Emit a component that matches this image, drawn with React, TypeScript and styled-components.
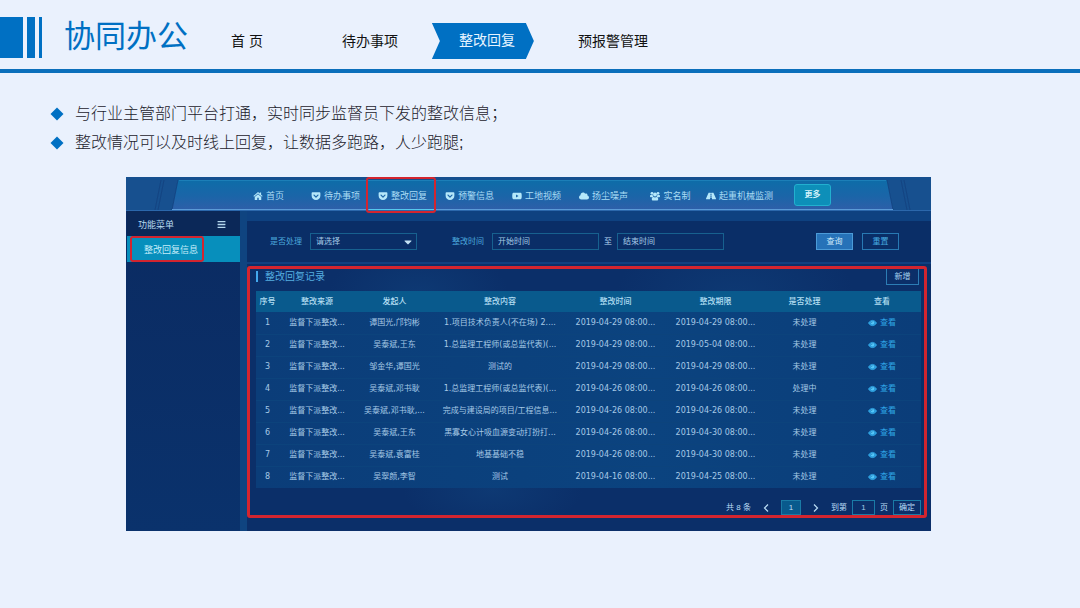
import React from "react";
import styled, { createGlobalStyle } from "styled-components";
import {
  FaBars,
  FaCaretDown,
  FaCloud,
  FaGetPocket,
  FaRoad,
  FaYoutube,
} from "react-icons/fa";

const sans = `"Liberation Sans", "Noto Sans CJK SC", sans-serif`;
const dense = `"DejaVu Sans", "Noto Sans CJK SC", sans-serif`;
const brand = "#0070c3";
const red = "#d3252f";

const GlobalStyle = createGlobalStyle`
  * { box-sizing: border-box; }
  body { margin: 0; background: #eaf1fd; font-family: ${sans}; }
  button, input, select { font: inherit; margin: 0; }
  a { color: inherit; text-decoration: none; }
`;

const Page = styled.div`
  min-height: 100vh;
  padding-bottom: 76px;
`;

const TopBar = styled.header`
  display: flex;
  align-items: flex-start;
  height: 73px;
  border-bottom: 4px solid #0b6fbb;
  white-space: nowrap;
`;

const Stripes = styled.div`
  display: flex;
  gap: 4px;
  margin-top: 17px;
  height: 41px;
`;

const Stripe = styled.span<{ $w: number }>`
  width: ${(p) => p.$w}px;
  background: ${brand};
`;

const Title = styled.h1`
  margin: 15px 43px 0 22px;
  font-size: 31px;
  line-height: 44px;
  font-weight: 400;
  color: ${brand};
`;

const TopNav = styled.nav`
  display: flex;
  align-items: center;
  margin-top: 23px;
  height: 36px;
  font-size: 14px;
  line-height: 36px;
  color: #111;
`;

const TopLink = styled.a<{ $after?: number }>`
  margin-right: ${(p) => p.$after ?? 0}px;
`;

const ActiveLink = styled(TopLink)`
  padding: 0 19px 0 27px;
  height: 36px;
  line-height: 34px;
  color: #e6f4ff;
  background: ${brand};
  clip-path: polygon(0 0, calc(100% - 8px) 0, 100% 50%, calc(100% - 8px) 100%, 0 100%, 8px 50%);
`;

const Points = styled.ul`
  list-style: none;
  margin: 26px 0 20px;
  padding: 0 0 0 50px;
  font-size: 16px;
  font-weight: 300;
  line-height: 29px;
  color: #1c222c;
`;

const Point = styled.li`
  display: flex;
  align-items: center;
  gap: 11px;
`;

const Board = styled.section`
  margin: 0 149px 0 126px;
  background: #0b2f69;
  color: #b9dcf5;
  font-size: 8px;
  line-height: 12px;
  white-space: nowrap;
`;

const BoardBar = styled.div`
  display: flex;
  height: 34px;
  padding-top: 3px;
  background: #154f8f;
  border-bottom: 1px solid #2b67ab;
`;

const BarEdge = styled.svg`
  flex: none;
  height: 30px;
`;

const BarMiddle = styled.nav`
  flex: 1;
  display: flex;
  align-items: stretch;
  padding-left: 51px;
  background: linear-gradient(#0e6ca8, #1b65a8 55%, #2d5fa9);
  border-top: 1px solid #1c7fb8;
  border-bottom: 1px solid #5b9bd8;
  font-size: 9px;
`;

const BarLink = styled.a<{ $wide?: boolean }>`
  position: relative;
  display: flex;
  align-items: center;
  justify-content: center;
  gap: 3px;
  width: ${(p) => (p.$wide ? 71 : 67)}px;
  padding-top: 2px;
  color: #a9dcf5;
  svg { width: 10px; height: 10px; color: #b5e8fa; }
`;

const BarActive = styled(BarLink)`
  box-shadow: 0 1px 0 #55c8ee;
`;

const Marker = styled.span<{ $inset: string }>`
  position: absolute;
  inset: ${(p) => p.$inset};
  border: 2px solid ${red};
  border-radius: 3px;
  pointer-events: none;
`;

const MoreButton = styled.button`
  align-self: center;
  margin-left: 19px;
  width: 37px;
  height: 22px;
  padding: 0;
  border: 1px solid #22b0cf;
  border-radius: 3px;
  background: #0d8fb9;
  color: #d3f3fb;
  font-size: 8px;
  font-weight: 700;
`;

const BoardBody = styled.div`
  display: flex;
`;

const Side = styled.aside`
  width: 114px;
  padding-left: 1px;
  background: linear-gradient(#0b2b62, #0a326c);
  font-size: 9px;
`;

const SideHead = styled.div`
  display: flex;
  align-items: center;
  justify-content: space-between;
  height: 25px;
  padding: 2px 14px 0 11px;
  background: #0b2858;
  color: #b5d8ee;
`;

const SideItem = styled.a`
  position: relative;
  display: flex;
  align-items: center;
  height: 26px;
  padding: 2px 0 0 17px;
  background: #078fbc;
  color: #c4edfa;
`;

const Main = styled.main`
  flex: 1;
  min-width: 0;
  padding-left: 7px;
  background: #0f4480;
`;

const Filters = styled.form`
  display: flex;
  align-items: center;
  height: 53px;
  padding: 0 32px 0 23px;
  border-top: 10px solid #0e4180;
  border-bottom: 2px solid #104080;
  background: #0a2e67;
`;

const FieldLabel = styled.label`
  margin-right: 8px;
  color: #4aa8dc;
`;

const Field = styled.span`
  position: relative;
  display: flex;
  align-items: center;
  width: 107px;
  svg { position: absolute; right: 3px; width: 12px; height: 12px; color: #c4e2f4; pointer-events: none; }
`;

const fieldLook = `
  width: 100%;
  height: 17px;
  padding: 0 5px;
  border: 1px solid #17618f;
  border-radius: 0;
  background: transparent;
  color: #a5cbe6;
  appearance: none;
  outline: none;
`;

const Select = styled.select`${fieldLook}`;

const Input = styled.input`
  ${fieldLook}
  &::placeholder { color: #a5cbe6; opacity: 1; }
`;

const RangeGap = styled.span`
  width: 18px;
  text-align: center;
`;

const RangeGroup = styled.div`
  display: flex;
  align-items: center;
  margin-left: 35px;
`;

const Actions = styled.div`
  display: flex;
  gap: 9px;
  margin-left: auto;
`;

const ActionButton = styled.button<{ $solid?: boolean }>`
  width: 37px;
  height: 17px;
  padding: 0;
  border: 1px solid ${(p) => (p.$solid ? "#4b9bd8" : "#2879b3")};
  background: ${(p) => (p.$solid ? "#2672b8" : "transparent")};
  color: ${(p) => (p.$solid ? "#d0eafb" : "#46a9e0")};
`;

const RecordsArea = styled.div`
  padding: 2px 4px 13px 0;
  background: #0b2f69;
`;

const Records = styled.section`
  padding: 0 3px 0 6px;
  border: 3px solid ${red};
  border-radius: 3px;
  background:
    radial-gradient(ellipse 90px 50px at 25% 10%, rgba(20, 80, 140, 0.3), transparent),
    radial-gradient(ellipse 120px 70px at 72% 12%, rgba(20, 80, 140, 0.3), transparent),
    radial-gradient(ellipse 90px 40px at 36% 90%, rgba(20, 80, 140, 0.3), transparent),
    #0b2f69;
`;

const RecordsHead = styled.div`
  display: flex;
  align-items: flex-start;
  justify-content: space-between;
  height: 22px;
`;

const RecordsTitle = styled.h2`
  margin: 2px 0 0;
  padding-left: 7px;
  border-left: 2px solid #43a9ee;
  font-size: 10px;
  line-height: 11px;
  font-weight: 400;
  color: #55aee0;
`;

const AddButton = styled.button`
  width: 33px;
  height: 16px;
  margin-right: 2px;
  padding: 0;
  border: 1px solid #2c7db5;
  border-top: 0;
  background: transparent;
  color: #a5d2ee;
`;

const Table = styled.table`
  width: 100%;
  table-layout: fixed;
  border-collapse: collapse;
  font-family: ${dense};
  text-align: center;
  th, td { height: 22px; padding: 0; overflow: hidden; }
  thead { background: #095a8d; color: #b3def2; }
  th { font-weight: 500; height: 21px; }
  tbody { background: linear-gradient(90deg, #0b3d79, #0b437f 60%, #0b3d79); color: #a6c9e6; }
  tbody tr + tr { border-top: 1px solid #0c437c; }
`;

const ViewLink = styled.a`
  display: flex;
  align-items: center;
  justify-content: center;
  gap: 3px;
  color: #2fa6e6;
`;

const Pager = styled.nav`
  display: flex;
  align-items: center;
  justify-content: flex-end;
  gap: 5px;
  margin-top: 12px;
`;

const PagerButton = styled.button<{ $look?: "page" | "outline" }>`
  display: flex;
  align-items: center;
  justify-content: center;
  width: ${(p) => (p.$look === "outline" ? 28 : 20)}px;
  height: 15px;
  padding: 0;
  border: ${(p) => (p.$look ? "1px solid #1a7ba6" : "0")};
  background: ${(p) => (p.$look === "page" ? "#095a8d" : "transparent")};
  color: #b9dcf5;
`;

const PageInput = styled(Input)`
  width: 23px;
  height: 15px;
  padding: 0;
  border-color: #1a7ba6;
  text-align: center;
`;

const columns: [string, number][] = [
  ["序号", 23],
  ["整改来源", 76],
  ["发起人", 79],
  ["整改内容", 132],
  ["整改时间", 99],
  ["整改期限", 101],
  ["是否处理", 77],
  ["查看", 78],
];
const total = columns.reduce((sum, [, w]) => sum + w, 0);

const rows = [
  ["谭国光,邝钧彬", "1.项目技术负责人(不在场) 2....", "04-29", "04-29", "未处理"],
  ["吴泰斌,王东", "1.总监理工程师(或总监代表)(...", "04-29", "05-04", "未处理"],
  ["邹金华,谭国光", "测试的", "04-29", "04-29", "未处理"],
  ["吴泰斌,邓书耿", "1.总监理工程师(或总监代表)(...", "04-26", "04-26", "处理中"],
  ["吴泰斌,邓书耿,...", "完成与建设局的项目/工程信息...", "04-26", "04-26", "未处理"],
  ["吴泰斌,王东", "黑寡女心计吸血源变动打扮打...", "04-26", "04-30", "未处理"],
  ["吴泰斌,袁富桂", "地基基础不稳", "04-26", "04-30", "未处理"],
  ["吴翠颜,李智", "测试", "04-16", "04-25", "未处理"],
];

const Diamond = () => (
  <svg width="14" height="14" viewBox="0 0 14 14" aria-hidden="true">
    <path d="M7 0.5 13.5 7 7 13.5 0.5 7z" fill={brand} />
  </svg>
);

const HomeIcon = () => (
  <svg viewBox="0 0 20 20" fill="currentColor" aria-hidden="true">
    <path d="M10 2 0.8 10l1.3 1.6L10 4.9l7.9 6.7 1.3-1.6-3-2.6V3h-2.6v2.1z" />
    <path d="M10 6.4 3.5 12v6h5v-4.5h3V18h5v-6z" />
  </svg>
);

const PeopleIcon = () => (
  <svg viewBox="0 0 20 20" fill="currentColor" aria-hidden="true">
    <circle cx="4" cy="4.6" r="2.8" />
    <circle cx="16" cy="4.6" r="2.8" />
    <circle cx="10" cy="7" r="3.8" />
    <path d="M0 11V9.600C0 8.300 .8 7.800 2 7.800h3.200c.2 1.600.9 2.800 1.800 3.600-1 .1-1.700.4-2.300 1H1.600C.6 12.400 0 12 0 11zM20 11V9.600c0-1.300-.8-1.800-2-1.800h-3.200c-.2 1.600-.9 2.800-1.800 3.600 1 .1 1.700.4 2.300 1h3.100c1 0 1.600-.4 1.600-1.400z" />
    <path d="M3.600 16.500c0-2.800 1-4.600 3.400-4.600.8.6 1.800 1 3 1s2.200-.4 3-1c2.400 0 3.400 1.800 3.400 4.600 0 1.500-1 2.500-2.500 2.500H6.100c-1.500 0-2.500-1-2.500-2.500z" />
  </svg>
);

const EyeIcon = () => (
  <svg width="9" height="8" viewBox="0 0 18 16" aria-hidden="true">
    <path d="M1 8C3 4.500 6 2.800 9 2.800S15 4.500 17 8c-2 3.500-5 5.200-8 5.200S3 11.500 1 8z" fill="#2a98d8" stroke="#39b6f3" strokeWidth="1.400" />
    <circle cx="9" cy="7.500" r="3.600" fill="#55c8fa" />
    <path d="M7 7.500A2 2 0 0 1 9 5.500" stroke="#0b437f" fill="none" />
  </svg>
);

const Chevron = ({ next }: { next?: boolean }) => (
  <svg width="6" height="10" viewBox="0 0 6 10" fill="none" stroke="currentColor" strokeWidth="1.2" aria-hidden="true">
    <path d={next ? "M1 1.500 4.500 5 1 8.500" : "M5 1.500 1.500 5 5 8.500"} />
  </svg>
);

const EdgeArt = ({ flip }: { flip?: boolean }) => {
  const width = flip ? 50 : 58;
  const fillId = flip ? "edgeR" : "edgeL";
  return (
    <BarEdge width={width} viewBox={`0 0 ${width} 30`} aria-hidden="true">
      <defs>
        <linearGradient id={fillId} x1="0" y1="0" x2="0" y2="1">
          <stop offset="0" stopColor="#0e6ca8" />
          <stop offset="0.55" stopColor="#1b65a8" />
          <stop offset="1" stopColor="#2d5fa9" />
        </linearGradient>
      </defs>
      <rect width={width} height="30" fill="#17508f" />
      <g transform={flip ? "translate(58 0) scale(-1 1)" : undefined}>
        <path d="M52 0H58V30H46z" fill={`url(#${fillId})`} />
        <path d="M52 0 46 30M38 0 32 30M35 0 29 30" stroke="#123f7c" strokeOpacity="0.7" fill="none" />
        <path d="M53 0.500H58" stroke="#1c7fb8" />
        <path d="M46 29.500H58" stroke="#5b9bd8" />
      </g>
    </BarEdge>
  );
};

export default function App() {
  return (
    <Page>
      <GlobalStyle />
      <TopBar>
        <Stripes aria-hidden="true">
          <Stripe $w={23} />
          <Stripe $w={8} />
          <Stripe $w={3} />
        </Stripes>
        <Title>协同办公</Title>
        <TopNav>
          <TopLink href="#home" $after={79}>首 页</TopLink>
          <TopLink href="#todo" $after={34}>待办事项</TopLink>
          <ActiveLink href="#reply" $after={44}>整改回复</ActiveLink>
          <TopLink href="#alerts">预报警管理</TopLink>
        </TopNav>
      </TopBar>

      <Points>
        <Point><Diamond />与行业主管部门平台打通，实时同步监督员下发的整改信息；</Point>
        <Point><Diamond />整改情况可以及时线上回复，让数据多跑路，人少跑腿;</Point>
      </Points>

      <Board>
        <BoardBar>
          <EdgeArt />
          <BarMiddle>
            <BarLink href="#b-home"><HomeIcon />首页</BarLink>
            <BarLink href="#b-todo"><FaGetPocket />待办事项</BarLink>
            <BarActive href="#b-reply">
              <FaGetPocket />整改回复
              <Marker $inset="-4px 0 -4px -3px" />
            </BarActive>
            <BarLink href="#b-alert"><FaGetPocket />预警信息</BarLink>
            <BarLink href="#b-video"><FaYoutube />工地视频</BarLink>
            <BarLink href="#b-dust"><FaCloud />扬尘噪声</BarLink>
            <BarLink href="#b-names"><PeopleIcon />实名制</BarLink>
            <BarLink href="#b-crane" $wide><FaRoad />起重机械监测</BarLink>
            <MoreButton type="button">更多</MoreButton>
          </BarMiddle>
          <EdgeArt flip />
        </BoardBar>

        <BoardBody>
          <Side>
            <SideHead>功能菜单<FaBars size={9} /></SideHead>
            <SideItem href="#reply-info">
              整改回复信息
              <Marker $inset="0 36px 0 3px" />
            </SideItem>
          </Side>

          <Main>
            <Filters onSubmit={(e) => e.preventDefault()}>
              <FieldLabel htmlFor="handled">是否处理</FieldLabel>
              <Field>
                <Select id="handled" defaultValue="">
                  <option value="">请选择</option>
                  <option value="no">未处理</option>
                  <option value="doing">处理中</option>
                </Select>
                <FaCaretDown />
              </Field>
              <RangeGroup>
                <FieldLabel htmlFor="from">整改时间</FieldLabel>
                <Field><Input id="from" placeholder="开始时间" /></Field>
                <RangeGap>至</RangeGap>
                <Field><Input aria-label="结束时间" placeholder="结束时间" /></Field>
              </RangeGroup>
              <Actions>
                <ActionButton type="submit" $solid>查询</ActionButton>
                <ActionButton type="reset">重置</ActionButton>
              </Actions>
            </Filters>

            <RecordsArea>
              <Records>
                <RecordsHead>
                  <RecordsTitle>整改回复记录</RecordsTitle>
                  <AddButton type="button">新增</AddButton>
                </RecordsHead>
                <Table>
                  <colgroup>
                    {columns.map(([name, w]) => (
                      <col key={name} style={{ width: `${(w / total) * 100}%` }} />
                    ))}
                  </colgroup>
                  <thead>
                    <tr>{columns.map(([name]) => <th key={name} scope="col">{name}</th>)}</tr>
                  </thead>
                  <tbody>
                    {rows.map(([who, what, at, due, state], i) => (
                      <tr key={i}>
                        <td>{i + 1}</td>
                        <td>监督下派整改...</td>
                        <td>{who}</td>
                        <td>{what}</td>
                        <td>{`2019-${at} 08:00...`}</td>
                        <td>{`2019-${due} 08:00...`}</td>
                        <td>{state}</td>
                        <td><ViewLink href={`#record-${i + 1}`}><EyeIcon />查看</ViewLink></td>
                      </tr>
                    ))}
                  </tbody>
                </Table>
                <Pager>
                  <span>共 8 条</span>
                  <PagerButton type="button" aria-label="上一页"><Chevron /></PagerButton>
                  <PagerButton type="button" $look="page">1</PagerButton>
                  <PagerButton type="button" aria-label="下一页"><Chevron next /></PagerButton>
                  <label htmlFor="page">到第</label>
                  <PageInput id="page" defaultValue="1" />
                  <span>页</span>
                  <PagerButton type="button" $look="outline">确定</PagerButton>
                </Pager>
              </Records>
            </RecordsArea>
          </Main>
        </BoardBody>
      </Board>
    </Page>
  );
}
